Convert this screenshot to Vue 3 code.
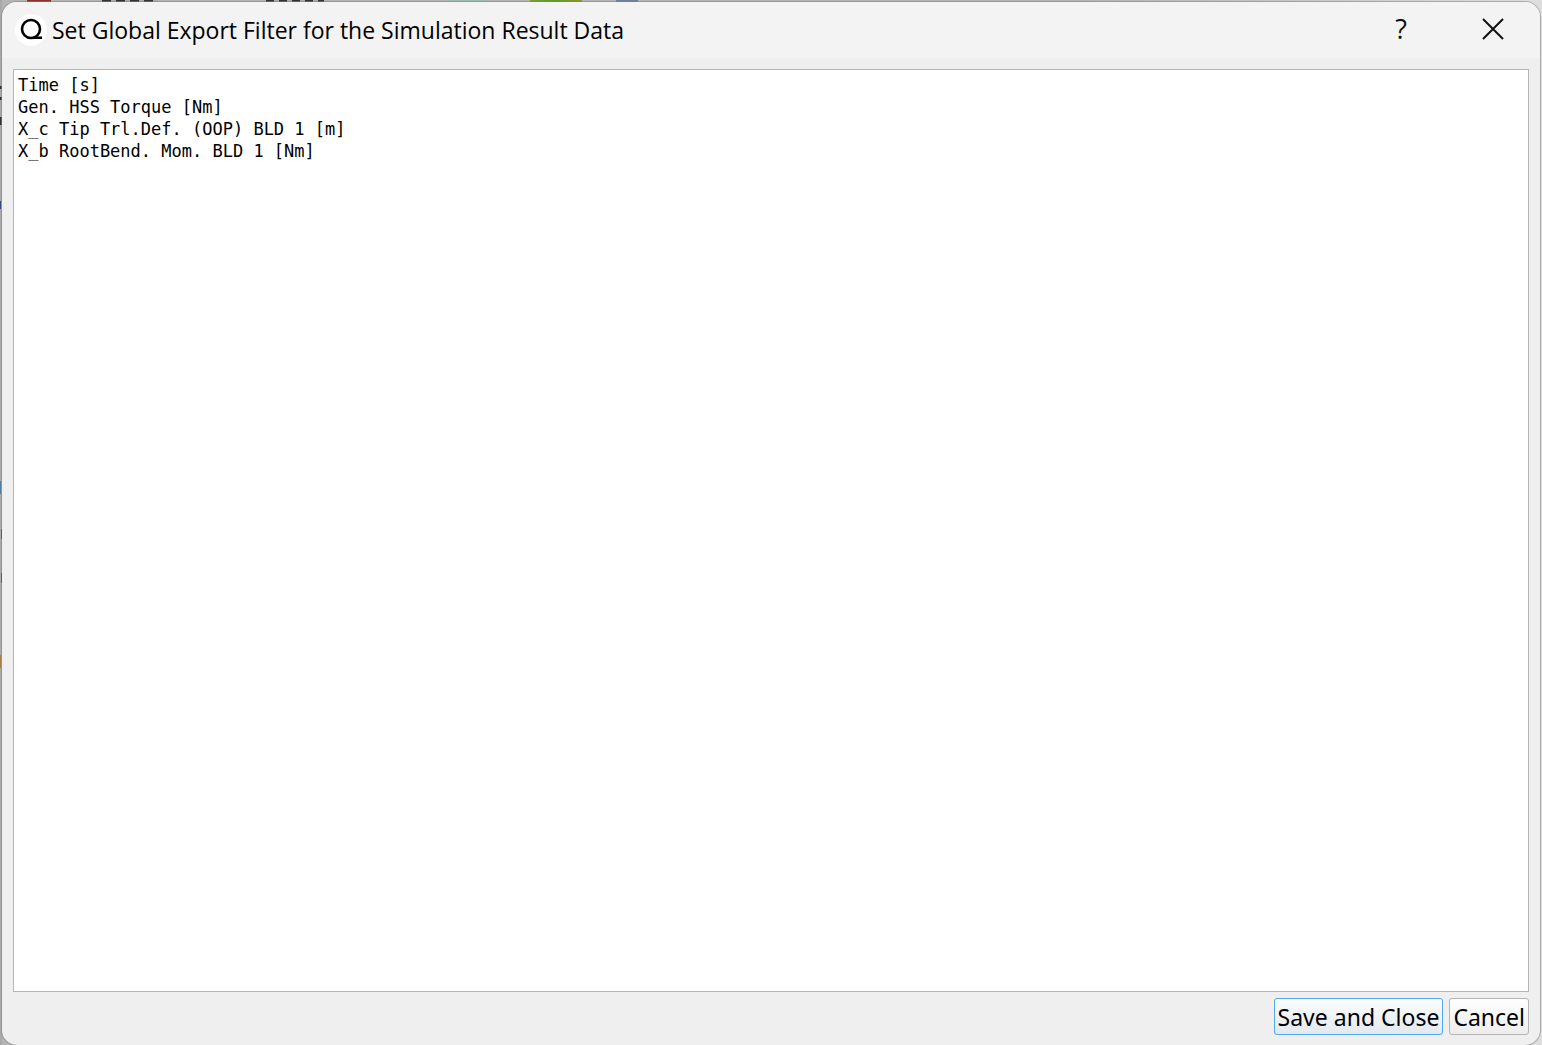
<script setup>
import { ref } from 'vue'

const filter = ref(`Time [s]
Gen. HSS Torque [Nm]
X_c Tip Trl.Def. (OOP) BLD 1 [m]
X_b RootBend. Mom. BLD 1 [Nm]`)
</script>

<template>
  <div class="desktop">
    <main class="dialog" role="dialog" aria-labelledby="dialog-title">
      <header class="titlebar">
        <svg class="logo" viewBox="0 0 32 32" aria-hidden="true">
          <circle cx="16" cy="16" r="16" fill="#fff" />
          <circle cx="16" cy="15" r="9" fill="none" stroke="#000" stroke-width="2.6" />
          <path d="M18 23.7h9" fill="none" stroke="#000" stroke-width="2.4" />
        </svg>
        <h1 id="dialog-title">Set Global Export Filter for the Simulation Result Data</h1>
        <button class="caption help" type="button" aria-label="Help">?</button>
        <button class="caption close" type="button" aria-label="Close">
          <svg viewBox="0 0 22 22" aria-hidden="true">
            <path d="M1 1 21 21M21 1 1 21" fill="none" stroke="#111" stroke-width="2" />
          </svg>
        </button>
      </header>
      <section class="content">
        <textarea v-model="filter" aria-label="Export filter" spellcheck="false"></textarea>
        <footer class="actions">
          <button class="action primary" type="button">Save and Close</button>
          <button class="action" type="button">Cancel</button>
        </footer>
      </section>
    </main>
  </div>
</template>

<style>
body {
  margin: 0;
}
</style>

<style scoped>
/* Edges of the application window that show round the dialog */
.desktop {
  box-sizing: border-box;
  height: 100vh;
  padding: 2px 2px 0;
  background:
    linear-gradient(#8a3230, #8a3230) 27px 0 / 24px 2px no-repeat,
    repeating-linear-gradient(90deg, #333 0 9px, #aaa 9px 14px) 102px 0 / 56px 2px no-repeat,
    repeating-linear-gradient(90deg, #333 0 8px, #aaa 8px 13px) 266px 0 / 58px 2px no-repeat,
    linear-gradient(#9dbcad, #9dbcad) 450px 0 / 38px 2px no-repeat,
    linear-gradient(90deg, #7d9a38, #5c9a28, #92942f) 530px 0 / 52px 2px no-repeat,
    linear-gradient(#727f9c, #727f9c) 616px 0 / 22px 2px no-repeat,
    linear-gradient(#333, #333) 0 86px / 2px 3px no-repeat,
    linear-gradient(#333, #333) 0 97px / 2px 3px no-repeat,
    linear-gradient(#333, #333) 0 117px / 2px 8px no-repeat,
    linear-gradient(#334a80, #334a80) 0 201px / 1px 8px no-repeat,
    linear-gradient(#4c7fa8, #4c7fa8) 0 481px / 1px 13px no-repeat,
    linear-gradient(#2b3857, #2b3857) 1px 529px / 1px 10px no-repeat,
    linear-gradient(#2b3857, #2b3857) 1px 573px / 1px 10px no-repeat,
    linear-gradient(#a87f4a, #a87f4a) 0 655px / 1px 13px no-repeat,
    linear-gradient(#aaa, #aaa) 0 0 / 2px 100% no-repeat,
    linear-gradient(90deg, #b4b4b4 70%, #dedede);
}
.dialog {
  display: flex;
  flex-direction: column;
  height: 100%;
  border-radius: 15px;
  box-shadow: 0 0 0 1px rgb(130 130 130 / 55%);
  overflow: hidden;
  background: #efefef;
}
.titlebar {
  display: flex;
  align-items: center;
  height: 56px;
  flex: none;
  padding: 0 1px 0 13px;
  background: #f3f3f3;
}
.logo {
  width: 32px;
  height: 32px;
}
h1 {
  flex: 1;
  margin: 0 0 0 5px;
  font: 400 23px/32px "Open Sans", sans-serif;
  color: #000;
}
.caption {
  display: flex;
  align-items: center;
  justify-content: center;
  width: 92px;
  height: 56px;
  padding: 0 0 2px;
  border: 0;
  background: none;
  color: #111;
  font: 500 27px/32px "Open Sans", sans-serif;
}
.close svg {
  width: 22px;
  height: 22px;
}
.content {
  display: flex;
  flex: 1;
  flex-direction: column;
  padding: 11px 11px 10px;
}
textarea {
  box-sizing: border-box;
  flex: 1;
  width: 100%;
  margin: 0;
  padding: 4px;
  border: 1px solid #b5b5b5;
  border-radius: 0;
  outline: 0;
  resize: none;
  background: #fff;
  color: #000;
  font: 400 17px/22px "DejaVu Sans Mono", monospace;
}
.actions {
  display: flex;
  justify-content: flex-end;
  gap: 6px;
  margin-top: 6px;
}
.action {
  height: 37px;
  padding: 0 3px;
  border: 1px solid #b5b5b5;
  border-radius: 3px;
  background: linear-gradient(#fff, #ededed);
  color: #000;
  font: 400 23px/34px "Noto Sans", sans-serif;
}
.primary {
  border-color: #4faaf0;
  background: linear-gradient(#fcfdfe, #e2e9f0);
}
</style>
